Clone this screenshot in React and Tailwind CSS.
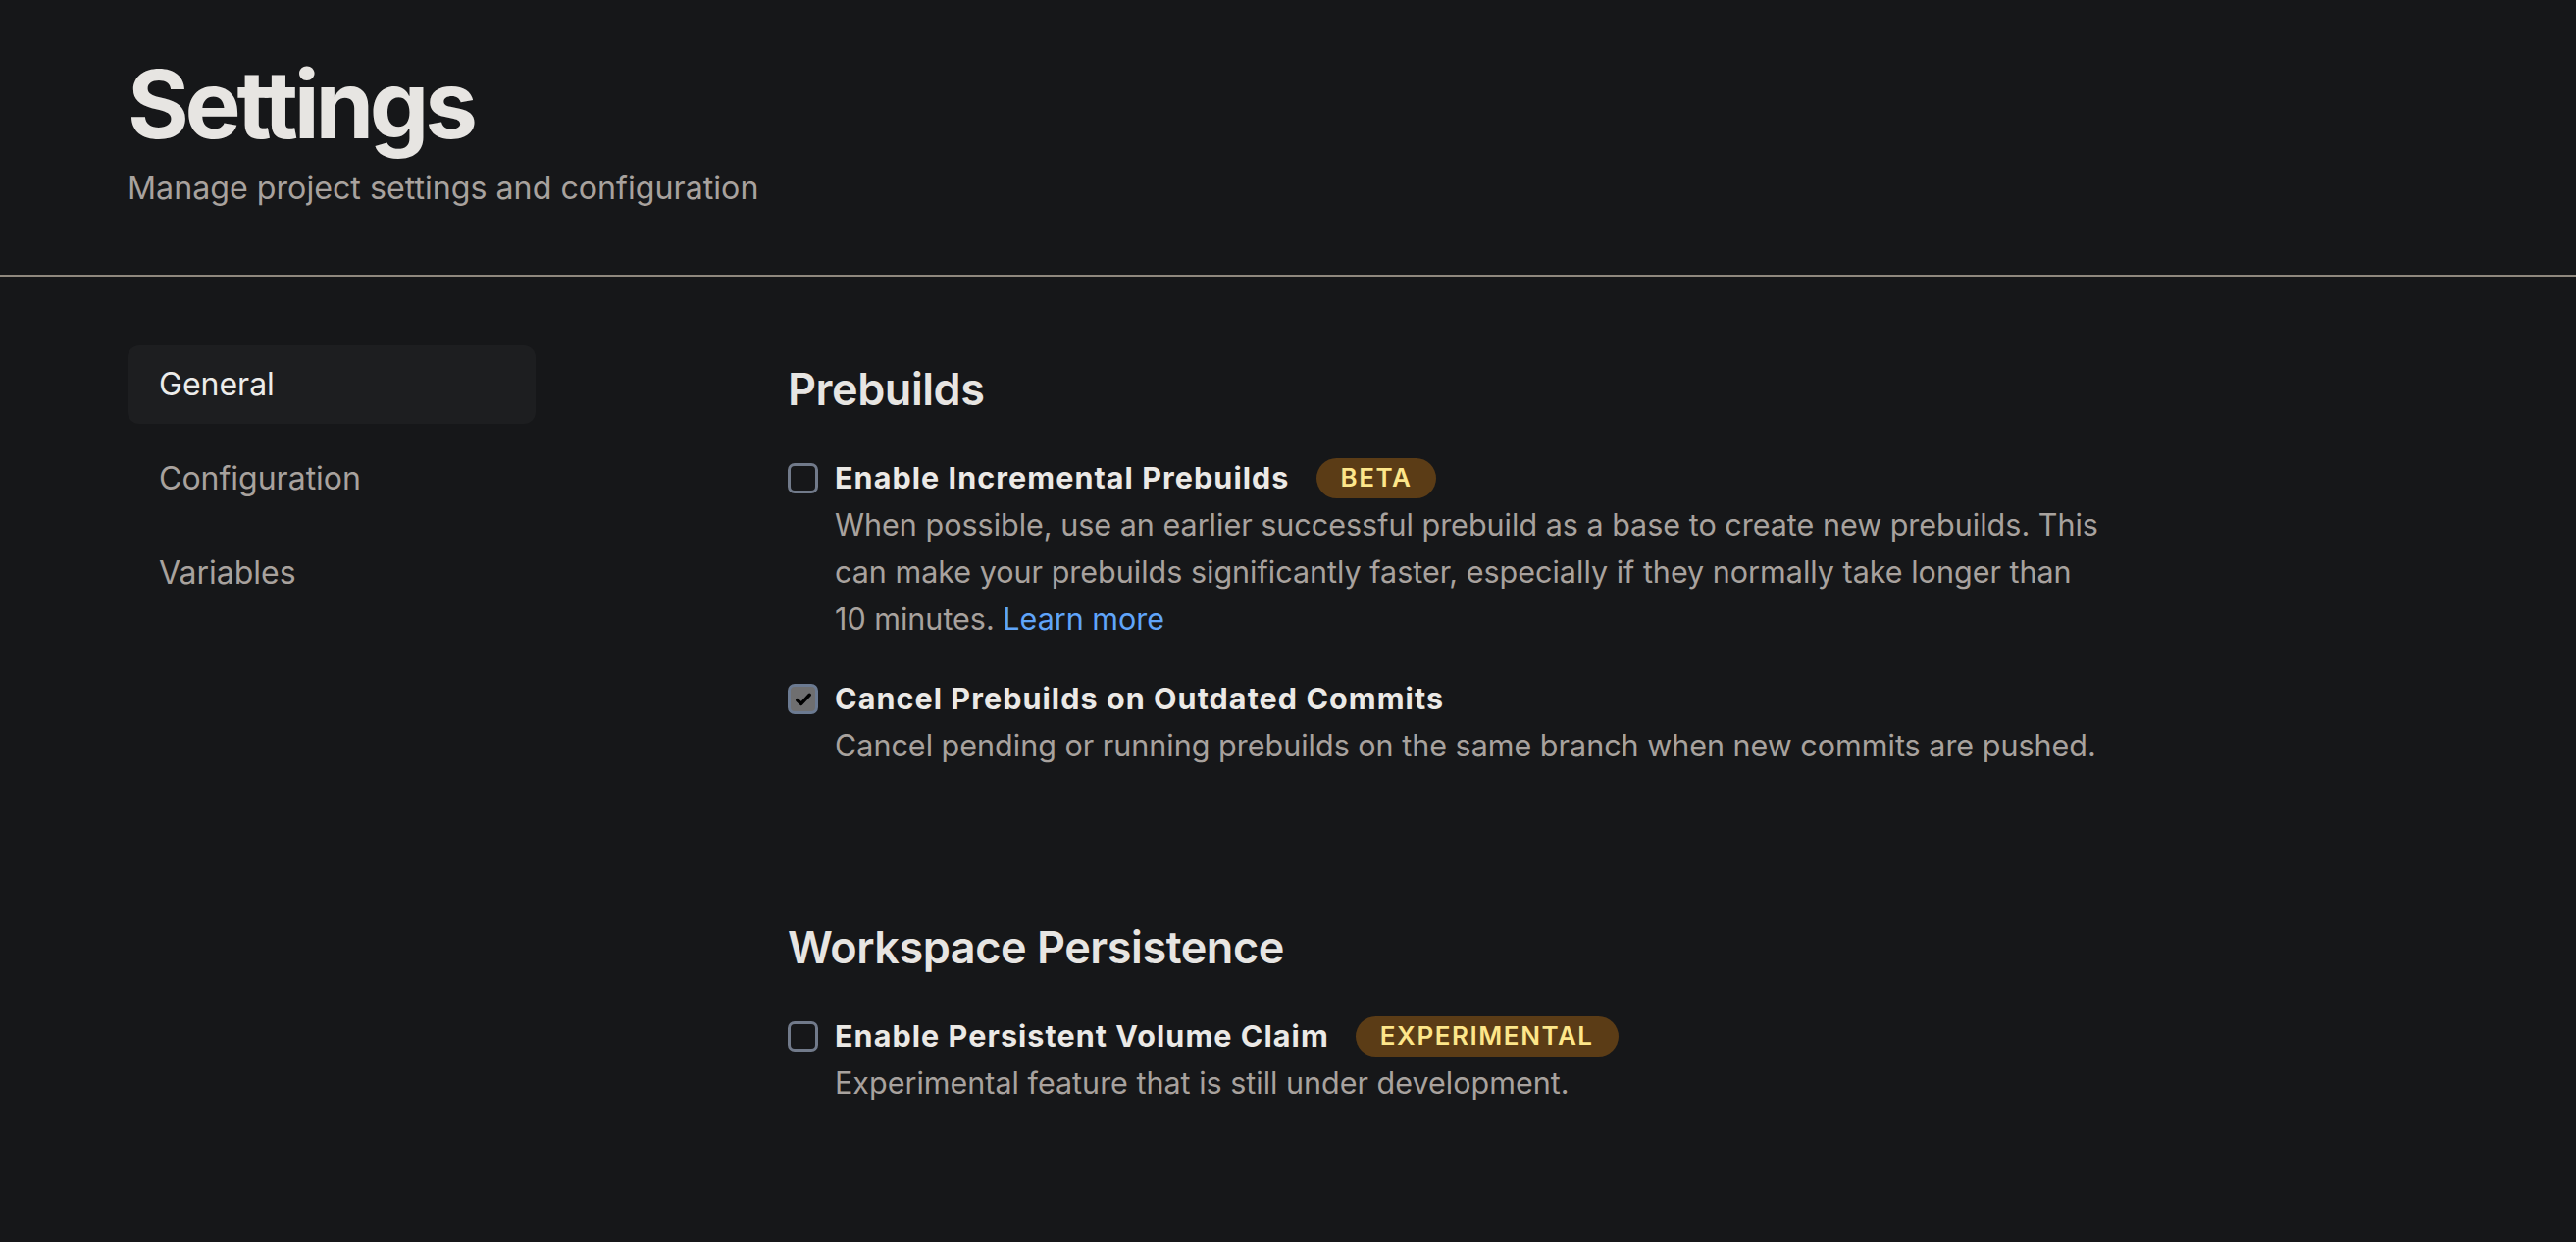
import React, { useState } from "react";

const Badge = ({ children }) => (
  <span className="ml-[27px] inline-flex h-[41px] items-center rounded-full bg-[#5b3c16] px-[25px] text-[26px] font-semibold tracking-[0.06em] text-[#fde68a]">
    {children}
  </span>
);

const Checkbox = ({ checked, onChange }) => (
  <button
    type="button"
    onClick={onChange}
    className={
      "mt-[9px] flex h-[31px] w-[31px] shrink-0 items-center justify-center rounded-[7px] border-[3px] " +
      (checked ? "border-[#6b7a91] bg-[#6f6f70]" : "border-[#717a8a] bg-transparent")
    }
  >
    {checked && (
      <svg viewBox="0 0 16 16" className="h-[20px] w-[20px]" fill="none">
        <path d="M3 8.5l3.2 3L13 4.2" stroke="#000" strokeWidth="2.8" strokeLinecap="round" strokeLinejoin="round" />
      </svg>
    )}
  </button>
);

const Option = ({ title, badge, checked, onChange, className = "", children }) => (
  <div className={"flex items-start " + className}>
    <Checkbox checked={checked} onChange={onChange} />
    <div className="ml-[17px] max-w-[1294px]">
      <div className="flex items-center text-[30.5px] font-bold leading-[48px] tracking-[0.035em] text-[#ebe9e6]">
        {title}
        {badge && <Badge>{badge}</Badge>}
      </div>
      <p className="text-[30.5px] leading-[48px] text-[#a8a29e]">{children}</p>
    </div>
  </div>
);

const App = () => {
  const [tab, setTab] = useState("General");
  const [opts, setOpts] = useState({ incremental: false, cancel: true, pvc: false });
  const toggle = (k) => setOpts({ ...opts, [k]: !opts[k] });

  return (
    <div className="min-h-screen bg-[#161719] font-['Inter',sans-serif] antialiased">
      {/* Header */}
      <div className="border-b-2 border-[#8f887e] px-[130px] pt-[58px] pb-[64px]">
        <h1 className="text-[96px] font-bold leading-[96px] tracking-[-0.045em] text-[#e7e5e2]">Settings</h1>
        <p className="mt-[14px] text-[32.2px] leading-[48px] text-[#a8a29e]">
          Manage project settings and configuration
        </p>
      </div>

      <div className="flex gap-[257px] px-[130px] pt-[70px]">
        {/* Sidebar */}
        <nav className="flex w-[416px] shrink-0 flex-col gap-[16px]">
          {["General", "Configuration", "Variables"].map((t) => (
            <button
              key={t}
              onClick={() => setTab(t)}
              className={
                "flex h-[80px] items-center rounded-[12px] px-[32px] text-left text-[32px] " +
                (tab === t ? "bg-[#1d1e20] text-[#ececea]" : "text-[#a8a29e]")
              }
            >
              {t}
            </button>
          ))}
        </nav>

        {/* Content */}
        <div className="pt-[17px]">
          <h2 className="text-[45px] font-semibold leading-[56px] tracking-[-0.01em] text-[#e7e5e2]">Prebuilds</h2>
          <Option
            className="mt-[38px]"
            title="Enable Incremental Prebuilds"
            badge="BETA"
            checked={opts.incremental}
            onChange={() => toggle("incremental")}
          >
            When possible, use an earlier successful prebuild as a base to create new prebuilds. This can
            make your prebuilds significantly faster, especially if they normally take longer than 10
            minutes. <a href="#" className="text-[#60a5fa]">Learn more</a>
          </Option>
          <Option
            className="mt-[33px]"
            title="Cancel Prebuilds on Outdated Commits"
            checked={opts.cancel}
            onChange={() => toggle("cancel")}
          >
            Cancel pending or running prebuilds on the same branch when new commits are pushed.
          </Option>

          <h2 className="mt-[154px] text-[45px] font-semibold leading-[56px] tracking-[-0.01em] text-[#e7e5e2]">
            Workspace Persistence
          </h2>
          <Option
            className="mt-[38px]"
            title="Enable Persistent Volume Claim"
            badge="EXPERIMENTAL"
            checked={opts.pvc}
            onChange={() => toggle("pvc")}
          >
            Experimental feature that is still under development.
          </Option>
        </div>
      </div>
    </div>
  );
};

export default App;
